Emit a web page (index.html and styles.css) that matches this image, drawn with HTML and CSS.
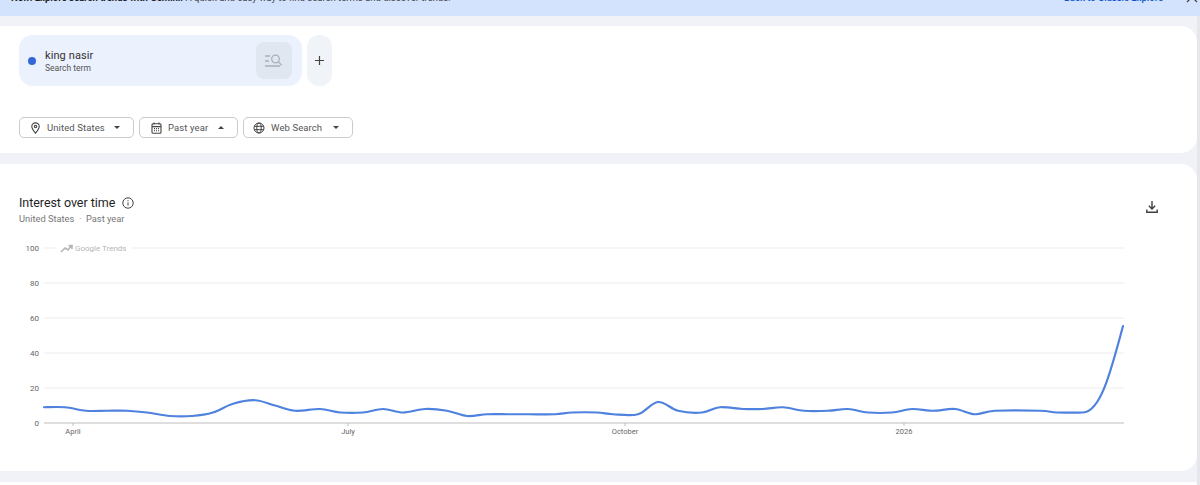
FILE: index.html
```html
<!DOCTYPE html>
<html lang="en">
<head>
    <meta charset="UTF-8">
    <title>Google Trends - Explore</title>
    <link rel="stylesheet" href="styles.css">
</head>
<body>
    <div class="banner">
        <p class="banner-text"><b>New! Explore search trends with Gemini.</b> A quick and easy way to find search terms and discover trends.</p>
        <a class="banner-link">Back to Classic Explore</a>
        <svg class="banner-close" width="12" height="12" viewBox="0 0 12 12"><path d="M1 0l10 10M11 0L1 10" stroke="#444" stroke-width="1.3" fill="none"/></svg>
    </div>

    <div class="page">
        <main class="content">
            <section class="card card-search">
                <div class="terms">
                    <div class="term">
                        <span class="term-dot"></span>
                        <div class="term-text">
                            <div class="term-name">king nasir</div>
                            <div class="term-type">Search term</div>
                        </div>
                        <div class="term-action">
                            <svg width="20" height="16" viewBox="0 0 20 16" fill="none" stroke="#a9b0bb" stroke-width="1.3">
                                <path d="M1 3h5M1 8h4M1 13h15"/>
                                <circle cx="11.5" cy="6" r="3.8"/>
                                <path d="M14.3 8.8l3.4 3.4"/>
                            </svg>
                        </div>
                    </div>
                    <div class="term-add">
                        <svg width="11" height="11" viewBox="0 0 11 11"><path d="M5.5 1v9M1 5.5h9" stroke="#444" stroke-width="1.2"/></svg>
                    </div>
                </div>
                <div class="filters">
                    <button class="chip chip-geo">
                        <svg width="11" height="12" viewBox="0 0 11 12" fill="none" stroke="#444" stroke-width="1.1"><path d="M5.5 11.2C3.4 8.6 1.8 6.8 1.8 4.6a3.7 3.7 0 0 1 7.4 0c0 2.2-1.6 4-3.7 6.6z"/><circle cx="5.5" cy="4.6" r="1.2"/></svg>
                        <span>United States</span>
                        <i class="caret"></i>
                    </button>
                    <button class="chip chip-time">
                        <svg width="11" height="12" viewBox="0 0 11 12" fill="none" stroke="#444" stroke-width="1.1"><rect x="1" y="1.8" width="9" height="9.4" rx="1"/><path d="M1 4.6h9M3 .4v2M8 .4v2M3 6.6h1M5 6.6h1M7 6.6h1M3 8.8h1M5 8.8h1M7 8.8h1"/></svg>
                        <span>Past year</span>
                        <i class="caret caret-up"></i>
                    </button>
                    <button class="chip chip-type">
                        <svg width="12" height="12" viewBox="0 0 12 12" fill="none" stroke="#444" stroke-width="1"><circle cx="6" cy="6" r="5"/><ellipse cx="6" cy="6" rx="2.2" ry="5"/><path d="M1.2 4.3h9.6M1.2 7.7h9.6"/></svg>
                        <span>Web Search</span>
                        <i class="caret"></i>
                    </button>
                </div>
            </section>

            <section class="card card-chart">
                <div class="chart-head">
                    <div>
                        <h2 class="chart-title">Interest over time
                            <svg class="info-icon" width="12" height="12" viewBox="0 0 12 12" fill="none" stroke="#444"><circle cx="6" cy="6" r="5.2"/><path d="M6 5.4v3.2M6 3.2v1.1"/></svg>
                        </h2>
                        <p class="chart-sub">United States &nbsp;·&nbsp; Past year</p>
                    </div>
                    <svg class="download" width="12" height="12" viewBox="0 0 12 12" fill="none" stroke="#3c4043" stroke-width="1.4"><path d="M6 0v7.6M2.8 4.8L6 8l3.2-3.2M.8 8.6v2.6h10.4V8.6"/></svg>
                </div>
                <svg class="chart" width="1196" height="204" viewBox="0 240 1196 204">
                    <g class="grid">
                        <path d="M44 248h11M131 248h993M44 283h1080M44 318h1080M44 353h1080M44 388h1080"/>
                    </g>
                    <path class="axis" d="M44 423h1080"/>
                    <path class="ticks" d="M73 423v3M348 423v3M625 423v3M904 423v3"/>
                    <g class="y-labels">
                        <text x="39" y="251">100</text>
                        <text x="39" y="286">80</text>
                        <text x="39" y="321">60</text>
                        <text x="39" y="356">40</text>
                        <text x="39" y="391">20</text>
                        <text x="39" y="426">0</text>
                    </g>
                    <g class="x-labels">
                        <text x="73" y="434">April</text>
                        <text x="348" y="434">July</text>
                        <text x="625" y="434">October</text>
                        <text x="904" y="434">2026</text>
                    </g>
                    <path class="mark-icon" d="M61 252l4-4 3 2 3-4M68.5 245.500h3.500v3.500"/>
                    <text class="mark-text" x="75" y="251">Google Trends</text>
                    <path id="trend" class="trend"/>
                </svg>
            </section>

            <section class="card card-next"></section>
        </main>
        <div class="scrollbar"></div>
    </div>
    <script src="chart.js"></script>
</body>
</html>
```

FILE: styles.css
```css
html, body {
    height: 485px;
    overflow: hidden;
}

body {
    font-family: Roboto, "Liberation Sans", sans-serif;
    margin: 0;
    padding: 0;
    background-color: #f0f2f8;
    color: #1f1f1f;
}

.banner {
    height: 16px;
    background-color: #d3e3fd;
    display: flex;
    align-items: flex-end;
    overflow: hidden;
    padding: 0 2px 0 11px;
    box-sizing: border-box;
    font-size: 9.5px;
    line-height: 12px;
}

.banner-text {
    margin: 0 0 12px;
    flex: 1;
    color: #444;
}

.banner-text b {
    color: #1f1f1f;
}

.banner-link {
    margin: 0 23px 12px 0;
    color: #0b57d0;
    font-weight: 500;
}

.banner-close {
    margin-bottom: 12px;
}

.page {
    display: flex;
    align-items: flex-start;
}

.content {
    flex: 1;
    padding-top: 10px;
}

.scrollbar {
    width: 3px;
    height: 469px;
    background-color: #e6e7ea;
}

.card {
    background: white;
    border-radius: 0 16px 16px 0;
    margin-bottom: 11px;
    box-sizing: border-box;
}

.card-search {
    height: 127px;
    padding: 9px 19px;
}

.terms {
    display: flex;
    gap: 5px;
}

.term {
    width: 283px;
    height: 51px;
    box-sizing: border-box;
    background-color: #ebf1fd;
    border-radius: 14px;
    display: flex;
    align-items: center;
    padding: 0 10px 0 9px;
}

.term-dot {
    width: 8px;
    height: 8px;
    border-radius: 50%;
    background-color: #3367d6;
    margin-right: 9px;
}

.term-text {
    flex: 1;
    margin-top: 1px;
}

.term-name {
    font-size: 11px;
    line-height: 15px;
    letter-spacing: 0.1px;
    color: #333;
}

.term-type {
    font-size: 8.5px;
    line-height: 11px;
    color: #555;
}

.term-action {
    width: 36px;
    height: 37px;
    background-color: #e1e7f0;
    border-radius: 8px;
    display: flex;
    align-items: center;
    justify-content: center;
}

.term-add {
    width: 25px;
    height: 51px;
    background-color: #f0f3f8;
    border-radius: 12px;
    display: flex;
    align-items: center;
    justify-content: center;
}

.filters {
    display: flex;
    gap: 5px;
    margin-top: 31px;
}

.chip {
    height: 21px;
    box-sizing: border-box;
    background: white;
    border: 1px solid #c9cbcf;
    border-radius: 5px;
    display: flex;
    align-items: center;
    padding: 0;
    font-family: inherit;
    font-size: 9.5px;
    letter-spacing: 0.1px;
    color: #555;
}

.chip-geo { width: 115px; padding-left: 10px; }
.chip-time { width: 99px; padding-left: 11px; }
.chip-type { width: 110px; padding-left: 9px; }

.chip span {
    margin-left: 6px;
    flex: 1;
    text-align: left;
    white-space: nowrap;
}

.caret {
    width: 0;
    height: 0;
    border-left: 3.5px solid transparent;
    border-right: 3.5px solid transparent;
    border-top: 3.5px solid #444;
    margin-right: 13px;
}

.caret-up {
    border-top: none;
    border-bottom: 3.5px solid #444;
}

.card-chart {
    height: 307px;
    padding-top: 30px;
}

.chart-head {
    display: flex;
    justify-content: space-between;
    align-items: flex-start;
    padding: 0 39px 0 19px;
}

.chart-title {
    margin: 0;
    font-size: 12.5px;
    line-height: 17px;
    font-weight: 400;
    letter-spacing: -0.05px;
    display: flex;
    align-items: center;
    gap: 7px;
}

.chart-sub {
    margin: 1px 0 0;
    font-size: 9.3px;
    line-height: 13px;
    color: #777;
}

.download {
    margin-top: 7px;
}

.chart {
    display: block;
    margin-top: 15px;
}

.grid path {
    stroke: #ececec;
    stroke-width: 1;
    fill: none;
}

.axis {
    stroke: #bdbdbd;
    stroke-width: 1;
}

.ticks {
    stroke: #bdbdbd;
}

.y-labels text {
    font-size: 8px;
    fill: #666;
    text-anchor: end;
}

.x-labels text {
    font-size: 7.5px;
    fill: #666;
    text-anchor: middle;
}

.mark-icon {
    fill: none;
    stroke: #b5b5b5;
    stroke-width: 1.6;
}

.mark-text {
    font-size: 8px;
    fill: #b5b5b5;
}

.trend {
    fill: none;
    stroke: #4f82de;
    stroke-width: 2.2;
    stroke-linejoin: round;
    stroke-linecap: round;
}

.card-next {
    height: 3px;
    margin-bottom: 0;
    border-radius: 0 16px 0 0;
}
```

FILE: chart.js
```js
// x position, value read off the chart
const points = [
    [44, 9], [65, 9], [86, 7], [107, 7], [127, 7], [147, 6], [170, 4], [192, 4],
    [213, 6], [233, 11], [255, 13], [275, 10], [295, 7], [320, 8], [340, 6], [363, 6],
    [383, 8], [403, 6], [425, 8], [447, 7], [467, 4], [487, 5], [508, 5], [529, 5],
    [555, 5], [572, 6], [597, 6], [613, 5], [638, 5], [658, 12], [678, 7], [702, 6],
    [720, 9], [743, 8], [763, 8], [783, 9], [804, 7], [828, 7], [848, 8], [868, 6],
    [892, 6], [912, 8], [933, 7], [955, 8], [975, 5], [995, 7], [1040, 7], [1057, 6],
    [1083, 6]
];

const toY = v => 423 - v * 1.75;
const pts = points.map(p => [p[0], toY(p[1])]);

// catmull-rom to bezier
let d = 'M' + pts[0][0] + ' ' + pts[0][1];
for (let i = 0; i < pts.length - 1; i++) {
    const p0 = pts[i - 1] || pts[i];
    const p1 = pts[i];
    const p2 = pts[i + 1];
    const p3 = pts[i + 2] || p2;
    const c1x = p1[0] + (p2[0] - p0[0]) / 6;
    const c1y = p1[1] + (p2[1] - p0[1]) / 6;
    const c2x = p2[0] - (p3[0] - p1[0]) / 6;
    const c2y = p2[1] - (p3[1] - p1[1]) / 6;
    d += ' C' + c1x + ' ' + c1y + ' ' + c2x + ' ' + c2y + ' ' + p2[0] + ' ' + p2[1];
}
// the last rise is one long curve
d += ' C1100 412 1110 375 1123 326';
document.getElementById('trend').setAttribute('d', d);
```
